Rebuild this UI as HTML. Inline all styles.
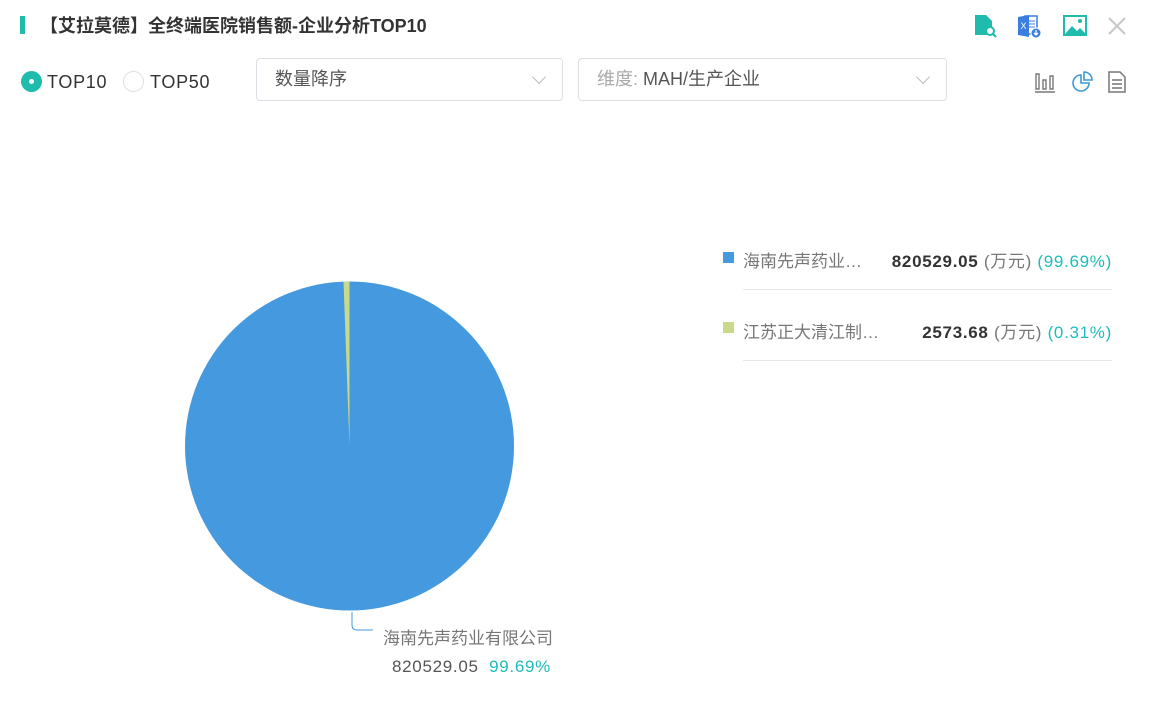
<!DOCTYPE html>
<html><head><meta charset="utf-8"><style>
body{margin:0;width:1156px;height:722px;background:#fff;position:relative;overflow:hidden;font-family:"Liberation Sans","Noto Sans CJK SC",sans-serif;color:#333}
.a{position:absolute;white-space:nowrap}
.sel{position:absolute;border:1px solid #dcdfe6;border-radius:4px;height:43px;top:58px;box-sizing:border-box;font-size:18px;line-height:41px;padding-left:18px;color:#555}
.chev{position:absolute;right:18px;top:13px;width:9px;height:9px;border-right:1.5px solid #b8bcc4;border-bottom:1.5px solid #b8bcc4;transform:rotate(45deg)}
.n{letter-spacing:0.7px}
</style></head><body>
<div class="a" style="left:20px;top:16px;width:5px;height:18px;background:#1fbcae"></div>
<div class="a" style="left:40px;top:12px;font-size:18px;font-weight:bold;color:#333">【艾拉莫德】全终端医院销售额-企业分析TOP10</div>
<svg class="a" style="left:974px;top:14px" width="24" height="24" viewBox="0 0 24 24"><path d="M1 1h11l6 6v14H1z" fill="#1fbcae"/><circle cx="16" cy="17" r="4" fill="#fff" stroke="#1fbcae" stroke-width="2"/><path d="M19 20l3 3" stroke="#1fbcae" stroke-width="2"/></svg>
<svg class="a" style="left:1017px;top:13px" width="26" height="26" viewBox="0 0 26 26"><rect x="8" y="3" width="12" height="18" fill="#fff" stroke="#3a7fe0" stroke-width="1.5"/><path d="M11 8h7M11 11h7M11 14h7" stroke="#3a7fe0"/><path d="M1 4l11-2v22L1 22z" fill="#3a7fe0"/><text x="3.5" y="16" font-size="9" fill="#fff" font-family="Liberation Sans">X</text><circle cx="19" cy="20" r="5" fill="#3a7fe0" stroke="#fff"/><path d="M19 17v5M17 20l2 2 2-2" stroke="#fff" stroke-width="1.3" fill="none"/></svg>
<svg class="a" style="left:1063px;top:15px" width="24" height="21" viewBox="0 0 24 21"><rect x="1" y="1" width="22" height="19" fill="none" stroke="#1fbcae" stroke-width="2"/><path d="M2 19l7-8 5 5 3-3 6 6z" fill="#1fbcae"/><circle cx="17" cy="6" r="2" fill="#1fbcae"/></svg>
<svg class="a" style="left:1107px;top:16px" width="20" height="20" viewBox="0 0 20 20"><path d="M2 2l16 16M18 2L2 18" stroke="#c8c8c8" stroke-width="2"/></svg>
<div class="a" style="left:21px;top:71px;width:21px;height:21px;border-radius:50%;background:#1fbcae"></div>
<div class="a" style="left:29px;top:79px;width:5px;height:5px;border-radius:50%;background:#fff"></div>
<div class="a n" style="left:47px;top:72px;font-size:18px;color:#333">TOP10</div>
<div class="a" style="left:123px;top:71px;width:19px;height:19px;border-radius:50%;border:1px solid #dcdfe6"></div>
<div class="a n" style="left:150px;top:72px;font-size:18px;color:#333">TOP50</div>
<div class="sel" style="left:256px;width:307px">数量降序<span class="chev"></span></div>
<div class="sel" style="left:578px;width:369px"><span style="color:#aaa">维度:</span> MAH/生产企业<span class="chev"></span></div>
<svg class="a" style="left:1034px;top:71px" width="22" height="22" viewBox="0 0 22 22"><path d="M2 3h3v15H2zM9 9h3v9H9zM16 5h3v13h-3z" fill="none" stroke="#777" stroke-width="1.4"/><path d="M1 21h20" stroke="#777" stroke-width="1.5"/></svg>
<svg class="a" style="left:1071px;top:71px" width="22" height="22" viewBox="0 0 22 22"><path d="M10 4A8 8 0 1 0 18 12H10z" fill="none" stroke="#3a9bd5" stroke-width="1.6"/><path d="M13 1A8 8 0 0 1 21 9H13z" fill="none" stroke="#3a9bd5" stroke-width="1.6"/></svg>
<svg class="a" style="left:1107px;top:71px" width="20" height="22" viewBox="0 0 20 22"><path d="M2 1h11l5 5v15H2z" fill="none" stroke="#777" stroke-width="1.5"/><path d="M5 9h10M5 13h10M5 17h10" stroke="#777" stroke-width="1.4"/></svg>
<svg class="a" style="left:0;top:0" width="1156" height="722">
<circle cx="349.5" cy="446" r="164.5" fill="#4599df"/>
<path d="M349.5 446L349.5 281.5A164.5 164.5 0 0 0 343.5 281.6Z" fill="#c9d98a"/>
<path d="M352 612v13q0 5 5 5h16" stroke="#4599df" fill="none" stroke-width="1"/>
<rect x="723" y="252" width="11" height="11" fill="#4599df"/>
<rect x="723" y="322" width="11" height="11" fill="#c9d98a"/>
<path d="M743 289.5h369M743 360.5h369" stroke="#e8e8e8"/>
</svg>
<div class="a" style="left:383px;top:624px;font-size:17px;color:#777">海南先声药业有限公司</div>
<div class="a n" style="left:392px;top:657px;font-size:17px;color:#555">820529.05 <span style="color:#1fbcbc;margin-left:5px">99.69%</span></div>
<div class="a" style="left:743px;top:247px;font-size:17px;color:#777">海南先声药业…</div>
<div class="a n" style="right:44px;top:247px;font-size:17px;color:#777"><b style="color:#333">820529.05</b> (万元) <span style="color:#1fbcbc">(99.69%)</span></div>
<div class="a" style="left:743px;top:318px;font-size:17px;color:#777">江苏正大清江制…</div>
<div class="a n" style="right:44px;top:318px;font-size:17px;color:#777"><b style="color:#333">2573.68</b> (万元) <span style="color:#1fbcbc">(0.31%)</span></div>
</body></html>
